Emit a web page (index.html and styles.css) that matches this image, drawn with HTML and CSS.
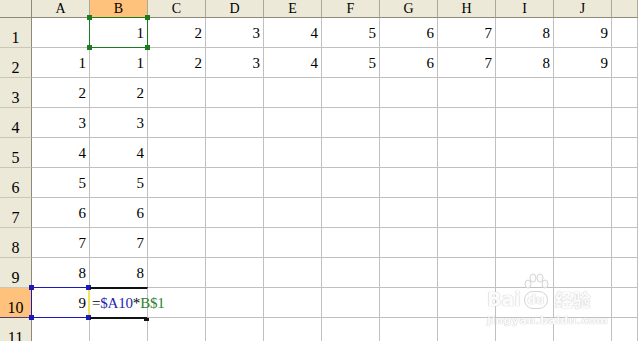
FILE: index.html
```html
<!DOCTYPE html>
<html lang="zh-CN">
<head>
    <meta charset="UTF-8">
    <title>Sheet1</title>
    <link rel="stylesheet" href="styles.css">
</head>
<body>
    <div class="sheet" id="sheet"></div>

    <div class="watermark">
        <div class="wm-logo">
            <span class="wm-bai">Bai</span>
            <span class="wm-du">
                <svg class="wm-paw" width="26" height="18" viewBox="0 0 26 18">
                    <ellipse cx="5" cy="11" rx="3" ry="4" />
                    <ellipse cx="10" cy="5" rx="3" ry="4" />
                    <ellipse cx="17" cy="5" rx="3" ry="4" />
                    <ellipse cx="22" cy="11" rx="3" ry="4" />
                </svg>
                <span class="wm-circle">du</span>
            </span>
            <span class="wm-cn">经验</span>
        </div>
        <div class="wm-url">jingyan.baidu.com</div>
    </div>

    <script>
        const cols = ["A", "B", "C", "D", "E", "F", "G", "H", "I", "J", ""];
        const rows = [
            ["", 1, 2, 3, 4, 5, 6, 7, 8, 9],
            [1, 1, 2, 3, 4, 5, 6, 7, 8, 9],
            [2, 2], [3, 3], [4, 4], [5, 5], [6, 6], [7, 7], [8, 8],
            [9, "formula"],
            []
        ];

        const sheet = document.getElementById("sheet");

        function cell(cls, html) {
            const div = document.createElement("div");
            div.className = cls;
            div.innerHTML = html;
            sheet.appendChild(div);
            return div;
        }

        // corner header + column headers
        cell("hd corner", "");
        cols.forEach(function (c) {
            cell(c === "B" ? "hd col active" : "hd col", c);
        });

        // rows
        rows.forEach(function (r, i) {
            const n = i + 1;
            cell(n === 10 ? "hd row active" : "hd row", n);
            for (let j = 0; j < cols.length; j++) {
                let v = r[j] === undefined ? "" : r[j];
                let cls = "c";
                if (v === "formula") {
                    cls += " editing";
                    v = '=<span class="ref-a">$A10</span>*<span class="ref-b">B$1</span><i class="fill"></i>';
                }
                const div = cell(cls, v);
                if (n === 1 && j === 1) {
                    div.classList.add("mark");
                    div.insertAdjacentHTML("beforeend", '<span class="box green"><i class="tl"></i><i class="tr"></i><i class="bl"></i><i class="br"></i></span>');
                }
                if (n === 10 && j === 0) {
                    div.classList.add("mark");
                    div.insertAdjacentHTML("beforeend", '<span class="box blue"><i class="tl"></i><i class="tr"></i><i class="bl"></i><i class="br"></i></span>');
                }
            }
        });
    </script>
</body>
</html>
```

FILE: styles.css
```css
body {
    margin: 0;
    background: #ffffff;
    overflow: hidden;
    font-family: "Liberation Serif", "Noto Sans CJK SC", serif;
    color: #000000;
}

.sheet {
    display: grid;
    grid-template-columns: 32px repeat(10, 58px) 1fr;
    grid-template-rows: 18px repeat(11, 30px);
    width: 638px;
}

.sheet > div {
    box-sizing: border-box;
    border-right: 1px solid #c0c0c0;
    border-bottom: 1px solid #c0c0c0;
}

/* headers */
.hd {
    background: #ece9d8;
    display: flex;
    justify-content: center;
}
.sheet > .col {
    font-size: 14px;
    line-height: 16px;
    align-items: center;
    padding-top: 1px;
    border-right-color: #aca899;
    border-bottom-color: #8d8a7b;
}
.sheet > .corner {
    border-right-color: #8d8a7b;
    border-bottom-color: #8d8a7b;
}
.sheet > .row {
    font-size: 16px;
    line-height: 16px;
    align-items: flex-end;
    padding-bottom: 1px;
    border-right-color: #8d8a7b;
    border-bottom-color: #cbc7b8;
}
.sheet > .active {
    background: #ffc27c;
    border-bottom-color: #4b3f6b;
}
.sheet > .row.active {
    border-right-color: #4b3f6b;
}

/* cells */
.c {
    display: flex;
    justify-content: flex-end;
    align-items: flex-end;
    font-size: 15px;
    line-height: 15px;
    padding: 0 3px 6px 0;
}

.mark {
    position: relative;
}
.box {
    position: absolute;
    top: -1px;
    left: -1px;
    right: -1px;
    bottom: -1px;
    border: 1px solid;
}
.box i {
    position: absolute;
    width: 5px;
    height: 5px;
}
.box .tl { top: -3px; left: -3px; }
.box .tr { top: -3px; right: -3px; }
.box .bl { bottom: -3px; left: -3px; }
.box .br { bottom: -3px; right: -3px; }

.green { border-color: #1d7a1d; }
.green i { background: #1d7a1d; }

.blue {
    border-color: #1a1ab8;
    border-right: 2px solid #f2e45a;
}
.blue i { background: #1a1ab8; }

/* cell being edited */
.sheet > .editing {
    position: relative;
    justify-content: flex-start;
    padding-left: 2px;
    border-top: 2px solid #111111;
    border-bottom: 2px solid #111111;
    margin-top: -1px;
    margin-bottom: -1px;
    letter-spacing: -0.2px;
    padding-bottom: 6px;
}
.ref-a { color: #2525b0; }
.ref-b { color: #2e822e; }
.fill {
    position: absolute;
    right: -2px;
    bottom: -4px;
    width: 5px;
    height: 3px;
    background: #111111;
}

/* watermark */
.watermark {
    position: absolute;
    left: 487px;
    top: 273px;
    color: #fcfcfc;
    text-shadow: 0 0 1px #c4c4c4, 0 0 1px #d2d2d2;
    font-family: "DejaVu Sans", sans-serif;
}
.wm-logo {
    display: flex;
    align-items: flex-end;
    gap: 2px;
}
.wm-bai {
    font-size: 19px;
    font-weight: bold;
    line-height: 19px;
}
.wm-du {
    display: flex;
    flex-direction: column;
    align-items: center;
}
.wm-paw {
    fill: #fcfcfc;
    stroke: #d4d4d4;
    stroke-width: 1;
}
.wm-circle {
    font-size: 12px;
    font-weight: bold;
    line-height: 16px;
    width: 22px;
    height: 16px;
    text-align: center;
    border: 1px solid #d4d4d4;
    border-radius: 9px;
}
.wm-cn {
    font-family: "Noto Sans CJK SC", sans-serif;
    font-size: 18px;
    font-weight: bold;
    line-height: 20px;
    margin-left: 4px;
}
.wm-url {
    font-size: 11px;
    font-weight: bold;
    line-height: 12px;
    margin-top: 6px;
    letter-spacing: 0.4px;
}
```
